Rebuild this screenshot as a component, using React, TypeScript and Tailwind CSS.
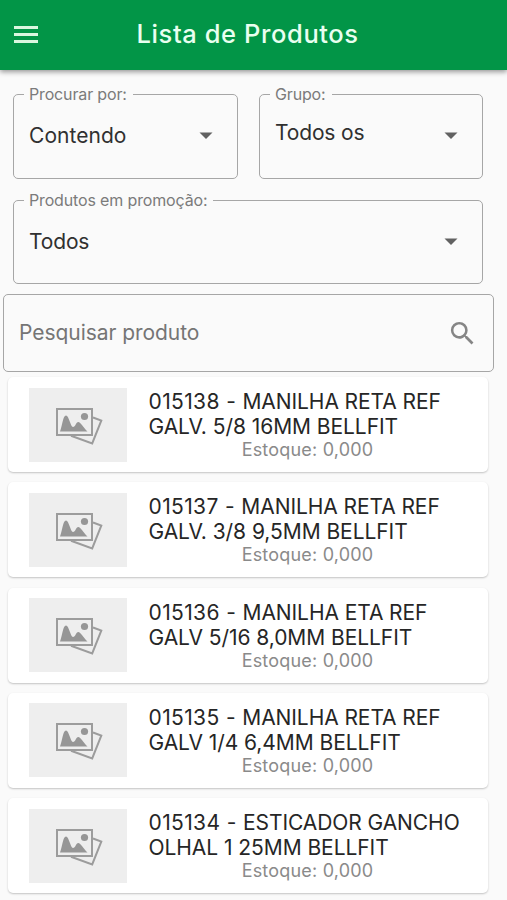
import type { ReactNode } from "react";

const products = [
  { code: "015138", name: "MANILHA RETA REF", detail: "GALV. 5/8 16MM BELLFIT", stock: "0,000" },
  { code: "015137", name: "MANILHA RETA REF", detail: "GALV. 3/8 9,5MM BELLFIT", stock: "0,000" },
  { code: "015136", name: "MANILHA ETA REF", detail: "GALV 5/16 8,0MM BELLFIT", stock: "0,000" },
  { code: "015135", name: "MANILHA RETA REF", detail: "GALV 1/4 6,4MM BELLFIT", stock: "0,000" },
  { code: "015134", name: "ESTICADOR GANCHO", detail: "OLHAL 1 25MM BELLFIT", stock: "0,000" },
];

function SelectField({ label, className, children }: { label: string; className: string; children: ReactNode }) {
  return (
    <fieldset className={`min-w-0 rounded-[5px] border-[1.5px] border-[#a6a6a6] pl-[10px] pr-[24px] ${className}`}>
      <legend className="h-4 whitespace-nowrap pl-[5px] pr-[6px] text-[16px] leading-4 tracking-[-0.15px] text-[#7b7b7b]">
        {label}
      </legend>
      <div className="flex h-[68px] items-center justify-between pl-[5px]">
        {children}
        <svg width="14" height="7" viewBox="0 0 14 7" className="mb-[1px] shrink-0">
          <path d="M0.5 0.5h13L7 7z" fill="#616161" />
        </svg>
      </div>
    </fieldset>
  );
}

function Placeholder() {
  return (
    <div className="flex h-[74px] w-[98px] shrink-0 items-center justify-center bg-[#eeeeee] pl-[2px] pt-[2px]">
      <svg width="48" height="40" viewBox="0 0 48 40" fill="none">
        <path d="M38 11.5l8.3 3L37.2 37.4 16 29.8" stroke="#9c9c9c" strokeWidth="2" />
        <rect x="2" y="3" width="35" height="26" fill="#eeeeee" stroke="#9c9c9c" strokeWidth="2" />
        <circle cx="29.5" cy="10.5" r="3.6" fill="#969696" />
        <path d="M5 25.500C7.500 19 8 9.500 11 9.500S15.500 21 18 21s3-5 5.300-5 5 5.500 9.200 9.500z" fill="#969696" />
      </svg>
    </div>
  );
}

export default function App() {
  return (
    <div className="flex h-[900px] w-[507px] flex-col overflow-hidden bg-[#fafafa] font-['Inter','Liberation_Sans',sans-serif]">
      <header className="grid h-[70px] shrink-0 grid-cols-[64px_1fr_76px] items-center bg-[#029547] pb-[2px] shadow-[0_2px_5px_rgba(0,0,0,0.4)]">
        <button aria-label="Menu" className="ml-[14px] flex w-6 flex-col gap-[4px]">
          <span className="h-[3px] bg-[#d9f7df]" />
          <span className="h-[3px] bg-[#d9f7df]" />
          <span className="h-[3px] bg-[#d9f7df]" />
        </button>
        <h1 className="whitespace-nowrap pl-[72.500px] text-[25.500px] font-medium leading-8 tracking-[0.600px] text-[#e9fff0]">
          Lista de Produtos
        </h1>
      </header>

      <section className="flex shrink-0 flex-col gap-[13px] pl-[13px] pr-[24px] pt-[16px]">
        <div className="flex gap-[21px]">
          <SelectField label="Procurar por:" className="h-[93px] w-[225px]">
            <span className="text-[21px] leading-6 tracking-[0.05px] text-[#303030]">Contendo</span>
          </SelectField>
          <SelectField label="Grupo:" className="h-[93px] w-[224px]">
            <span className="mb-[7px] text-[21px] leading-6 tracking-[-0.15px] text-[#303030]">Todos os</span>
          </SelectField>
        </div>
        <SelectField label="Produtos em promoção:" className="h-[92px] w-[470px]">
          <span className="text-[21px] leading-6 tracking-[-0.15px] text-[#303030]">Todos</span>
        </SelectField>
      </section>

      <div className="ml-[3px] mt-[10px] flex h-[78px] w-[491px] shrink-0 items-center justify-between rounded-[5px] border-[1.5px] border-[#a6a6a6] pl-[15px] pr-[15px]">
        <span className="text-[21px] leading-6 tracking-[-0.05px] text-[#757575]">Pesquisar produto</span>
        <svg width="31" height="31" viewBox="0 0 24 24" fill="#858585">
          <path d="M15.500 14h-.79l-.28-.27A6.470 6.470 0 0 0 16 9.500 6.500 6.500 0 1 0 9.500 16c1.610 0 3.090-.59 4.230-1.570l.27.28v.79l5 4.990L20.490 19l-4.990-5zm-6 0C7.010 14 5 11.990 5 9.500S7.010 5 9.500 5 14 7.010 14 9.500 11.990 14 9.500 14z" />
        </svg>
      </div>

      <main className="mt-[5px] flex shrink-0 flex-col gap-[10.300px] pl-[8px]">
        {products.map((product) => (
          <article
            key={product.code}
            className="flex h-[95px] w-[480px] items-center rounded-[5px] bg-white pl-[21px] shadow-[0_1px_2px_rgba(0,0,0,0.22)]"
          >
            <Placeholder />
            <div className="ml-[21.500px] flex w-[318px] flex-col pt-[1px] text-[21px] leading-[25px] text-[#262626]">
              <p className="whitespace-nowrap tracking-[-0.08px]">
                <span className="tracking-[0.38px]">{product.code} - </span>
                {product.name}
              </p>
              <p className="whitespace-nowrap tracking-[-0.06px]">{product.detail}</p>
              <p className="text-center text-[18px] leading-[22px] tracking-[0.200px] text-[#8a8a8a]">
                Estoque: {product.stock}
              </p>
            </div>
          </article>
        ))}
      </main>
    </div>
  );
}
